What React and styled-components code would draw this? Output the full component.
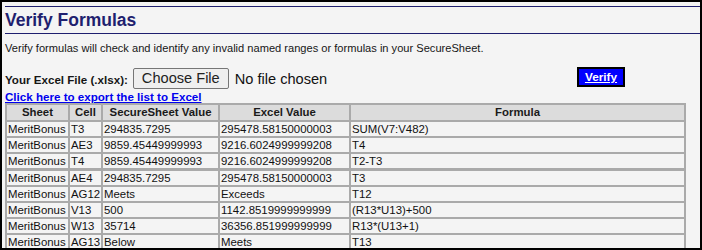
import styled, { createGlobalStyle } from 'styled-components';

const GlobalStyle = createGlobalStyle`
  html, body { margin: 0; padding: 0; background: #ffffff; }
  body { font-family: "Liberation Sans", Arial, sans-serif; }
`

const rows = [
  ['MeritBonus', 'T3', '294835.7295', '295478.58150000003', 'SUM(V7:V482)'],
  ['MeritBonus', 'AE3', '9859.45449999993', '9216.6024999999208', 'T4'],
  ['MeritBonus', 'T4', '9859.45449999993', '9216.6024999999208', 'T2-T3', true],
  ['MeritBonus', 'AE4', '294835.7295', '295478.58150000003', 'T3'],
  ['MeritBonus', 'AG12', 'Meets', 'Exceeds', 'T12'],
  ['MeritBonus', 'V13', '500', '1142.8519999999999', '(R13*U13)+500'],
  ['MeritBonus', 'W13', '35714', '36356.851999999999', 'R13*(U13+1)'],
  ['MeritBonus', 'AG13', 'Below', 'Meets', 'T13'],
]

export default function App() {
  return (
    <>
      <GlobalStyle />
      <Frame>
        <Title>Verify Formulas</Title>
        <Intro>Verify formulas will check and identify any invalid named ranges or formulas in your SecureSheet.</Intro>
        <UploadRow>
          <UploadGroup>
            <Label>Your Excel File (.xlsx):</Label>
            <FileInput type="file" accept=".xlsx" />
          </UploadGroup>
          <VerifyButton href="#">Verify</VerifyButton>
        </UploadRow>
        <ExportLink href="#">Click here to export the list to Excel</ExportLink>
        <Grid>
          <colgroup>
            <col style={{ width: 63 }} />
            <col style={{ width: 33 }} />
            <col style={{ width: 117 }} />
            <col style={{ width: 131 }} />
            <col />
          </colgroup>
          <thead>
            <tr>
              <Head>Sheet</Head>
              <Head>Cell</Head>
              <Head>SecureSheet Value</Head>
              <Head>Excel Value</Head>
              <Head>Formula</Head>
            </tr>
          </thead>
          <tbody>
            {rows.map((r, i) => (
              <Row key={i} $split={r[5]}>
                {r.slice(0, 5).map((c, j) => <Cell key={j}>{c}</Cell>)}
              </Row>
            ))}
          </tbody>
        </Grid>
      </Frame>
    </>
  )
}

const Frame = styled.div`
  width: 702px;
  height: 250px;
  box-sizing: border-box;
  border: 2px solid #000;
  background: #f4f4f4;
  overflow: hidden;
  padding: 4px 0 0 3px;
  color: #161616;
  font-size: 12px;
`

const Title = styled.h2`
  margin: 0;
  border-top: 1px solid #1f1f6f;
  border-bottom: 1px solid #1f1f6f;
  color: #1f1f6f;
  font-size: 17.5px;
  font-weight: bold;
  line-height: 26px;
`

const Intro = styled.p`
  margin: 7px 0 0;
  font-size: 11.1px;
  line-height: 14px;
`

const UploadRow = styled.div`
  display: flex;
  align-items: center;
  margin-top: 12px;
  height: 22px;
`

const UploadGroup = styled.div`
  width: 572px;
  display: flex;
  align-items: center;
  gap: 5px;
`

const Label = styled.span`
  font-weight: bold;
  font-size: 11.6px;
  padding-top: 2px;
`

const FileInput = styled.input`
  font-family: "Liberation Sans", Arial, sans-serif;
  font-size: 14.6px;
  color: #111;
  &::file-selector-button {
    font: inherit;
    color: #222;
    background: #efefef;
    border: 1px solid #767676;
    border-radius: 2px;
    padding: 0 8px;
    height: 21px;
    margin-right: 6px;
  }
`

const VerifyButton = styled.a`
  display: inline-block;
  box-sizing: border-box;
  width: 48px;
  height: 20px;
  line-height: 16px;
  text-align: center;
  background: #0000ff;
  border: 2px solid #000;
  color: #fff;
  font-size: 11.8px;
  font-weight: bold;
  text-decoration: underline;
  margin-top: -2px;
`

const ExportLink = styled.a`
  display: block;
  color: #0000ee;
  font-size: 11.6px;
  font-weight: bold;
  text-decoration: underline;
  line-height: 13px;
  margin-top: 1px;
  width: max-content;
`

const Grid = styled.table`
  width: 681px;
  table-layout: fixed;
  border-collapse: collapse;
  border: 2px solid #aaa;
  font-size: 11.4px;
`

const Head = styled.th`
  background: #dcdcdc;
  border: 2px solid #aaa;
  font-weight: bold;
  text-align: center;
  padding: 1px 0;
  line-height: 13px;
  white-space: nowrap;
  color: #1a1a1a;
`

const Row = styled.tr`
  border-bottom: ${p => (p.$split ? '3px' : '2px')} solid #aaa;
`

const Cell = styled.td`
  border: 2px solid #aaa;
  padding: 0 0 0 1px;
  line-height: 14px;
  white-space: nowrap;
  overflow: visible;
  color: #111;
`
